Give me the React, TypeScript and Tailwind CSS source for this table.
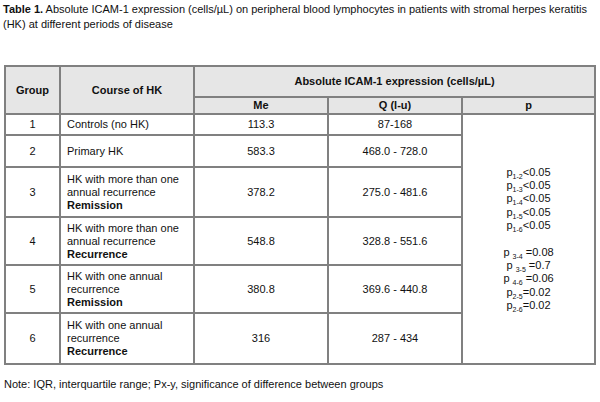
import React from "react";

const rows = [
  { g: "1", course: ["Controls (no HK)"], me: "113.3", q: "87-168", h: "h-[21px]" },
  { g: "2", course: ["Primary HK"], me: "583.3", q: "468.0 - 728.0", h: "h-[32px]" },
  { g: "3", course: ["HK with more than one", "annual recurrence"], bold: "Remission", me: "378.2", q: "275.0 - 481.6", h: "h-[50px]" },
  { g: "4", course: ["HK with more than one", "annual recurrence"], bold: "Recurrence", me: "548.8", q: "328.8 - 551.6", h: "h-[48px]" },
  { g: "5", course: ["HK with one annual", "recurrence"], bold: "Remission", me: "380.8", q: "369.6 - 440.8", h: "h-[48px]" },
  { g: "6", course: ["HK with one annual", "recurrence"], bold: "Recurrence", me: "316", q: "287 - 434", h: "h-[51px]" },
];

const pFirst = ["1-2", "1-3", "1-4", "1-5", "1-6"];
const pSecond = [
  { s: "3-4", v: "=0.08", sp: true },
  { s: "3-5", v: "=0.7", sp: true },
  { s: "4-6", v: "=0.06", sp: true },
  { s: "2-5", v: "=0.02", sp: false },
  { s: "2-6", v: "=0.02", sp: false },
];

const cell = "border-2 border-[#808080] p-0 align-middle";
const sub = "text-[7px] leading-[0] relative bottom-[-3px] align-baseline";

export default function App() {
  return (
    <div className="w-[600px] h-[402px] bg-white text-[#111] font-['Liberation_Sans',Arial,sans-serif] text-[11px] leading-[15px]">
      <div className="px-[3px] pt-[2px]">
        <b>Table 1.</b> Absolute ICAM-1 expression (cells/µL) on peripheral blood lymphocytes in patients with stromal herpes keratitis (HK) at different periods of disease
      </div>

      <table className="ml-[4px] mt-[33px] border-collapse table-fixed w-[590px]">
        <colgroup>
          <col className="w-[55px]" />
          <col className="w-[134px]" />
          <col className="w-[134px]" />
          <col className="w-[134px]" />
          <col className="w-[133px]" />
        </colgroup>
        <thead>
          <tr className="h-[31px] bg-[#e6e6e6] font-bold">
            <th rowSpan={2} className={cell}>Group</th>
            <th rowSpan={2} className={cell}>Course of HK</th>
            <th colSpan={3} className={cell}>Absolute ICAM-1 expression (cells/µL)</th>
          </tr>
          <tr className="h-[17px] bg-[#e6e6e6] font-bold">
            <th className={cell}>Me</th>
            <th className={cell}>Q (l-u)</th>
            <th className={cell}>p</th>
          </tr>
        </thead>
        <tbody>
          {rows.map((r, i) => (
            <tr key={r.g} className={r.h}>
              <td className={`${cell} text-center`}>{r.g}</td>
              <td className={`${cell} pl-[6px] leading-[13px]`}>
                {r.course.map((c) => (
                  <div key={c}>{c}</div>
                ))}
                {r.bold && <div className="font-bold">{r.bold}</div>}
              </td>
              <td className={`${cell} text-center`}>{r.me}</td>
              <td className={`${cell} text-center`}>{r.q}</td>
              {i === 0 && (
                <td rowSpan={6} className={`${cell} text-center leading-[13.3px]`}>
                  {pFirst.map((s) => (
                    <div key={s}>
                      p<sub className={sub}>{s}</sub>&lt;0.05
                    </div>
                  ))}
                  <div>&nbsp;</div>
                  {pSecond.map((p) => (
                    <div key={p.s}>
                      p{p.sp ? " " : ""}
                      <sub className={sub}>{p.s}</sub>
                      {p.sp ? " " : ""}
                      {p.v}
                    </div>
                  ))}
                </td>
              )}
            </tr>
          ))}
        </tbody>
      </table>

      <div className="px-[4px] mt-[12px]">
        Note: IQR, interquartile range; Px-y, significance of difference between groups
      </div>
    </div>
  );
}
